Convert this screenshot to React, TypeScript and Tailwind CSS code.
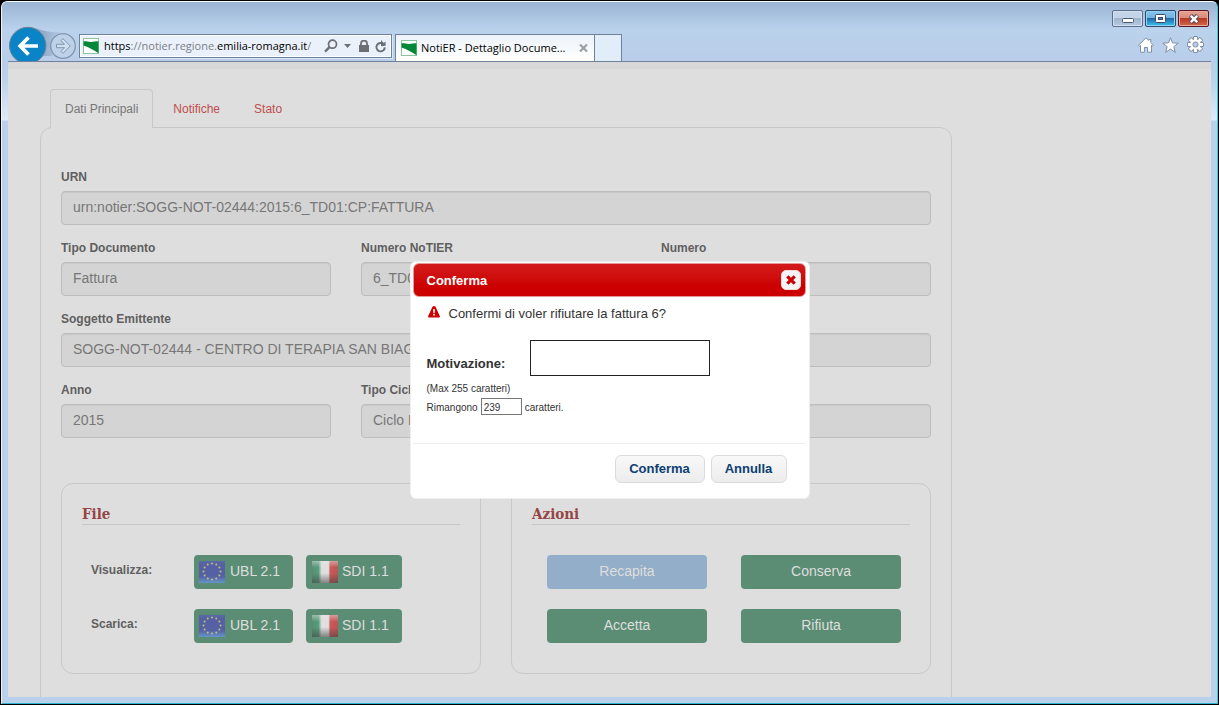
import React from "react";

type FieldProps = {
  id: string;
  label: string;
  value: string;
  wide?: boolean;
};

const FIELDS: FieldProps[] = [
  { id: "urn", label: "URN", value: "urn:notier:SOGG-NOT-02444:2015:6_TD01:CP:FATTURA", wide: true },
  { id: "tipo-documento", label: "Tipo Documento", value: "Fattura" },
  { id: "numero-notier", label: "Numero NoTIER", value: "6_TD01" },
  { id: "numero", label: "Numero", value: "" },
  { id: "emittente", label: "Soggetto Emittente", value: "SOGG-NOT-02444 - CENTRO DI TERAPIA SAN BIAGIO", wide: true },
  { id: "anno", label: "Anno", value: "2015" },
  { id: "tipo-ciclo", label: "Tipo Ciclo", value: "Ciclo Passivo" },
  { id: "stato", label: "Stato", value: "" },
];

const ACTIONS = [
  { label: "Recapita", disabled: true },
  { label: "Conserva", disabled: false },
  { label: "Accetta", disabled: false },
  { label: "Rifiuta", disabled: false },
];

export default function App() {
  return (
    <div className="flex h-screen flex-col overflow-hidden bg-black font-['Liberation_Sans',Arial,sans-serif]">
      <div className="flex min-h-0 flex-1 flex-col overflow-hidden rounded-t-md border border-black">
        <div className="flex min-h-0 flex-1 flex-col rounded-t-md border-t border-r border-b border-l border-t-white border-r-[#3fc4de] border-b-[#2fb4d0] border-l-[#eef5fc] bg-[linear-gradient(to_bottom,#9ab4d3_0px,#bad2ec_28px,#b9cde9_60px,#bcd3ec_80px,#dfeaf7_118px,#b9d1ea_119px)] px-1.5 pb-1.5">
          <BrowserHeader />
          <main className="relative min-h-0 flex-1 overflow-hidden bg-[#dedede]">
            <div className="h-[7px] bg-[#d8d8d8]" />
            <DocumentPage />
            <ConfirmDialog />
          </main>
        </div>
      </div>
    </div>
  );
}

function BrowserHeader() {
  return (
    <header className="flex h-15 flex-none flex-col overflow-hidden font-['Open_Sans','Noto_Sans',sans-serif] text-xs">
      <div className="flex h-6 flex-none justify-end gap-0.5 pt-2 pr-0.5">
        <button aria-label="Riduci a icona" className="flex h-[17px] w-[31px] items-center justify-center rounded-xs border border-[#5c6f8c] bg-[linear-gradient(#c3d4e8_0_50%,#a0b6d0_50%,#b4cae2)] shadow-[inset_0_0_0_1px_#d3e1f0]">
          <svg width="12" height="6" viewBox="0 0 12 6" className="mt-1">
            <rect x="0.5" y="0.5" width="11" height="4" rx="1" fill="#fff" stroke="#4b5565" />
          </svg>
        </button>
        <button aria-label="Ingrandisci" className="flex h-[17px] w-[31px] items-center justify-center rounded-xs border border-[#2d4a6b] bg-[linear-gradient(#8cc4ea_0,#6cb0e0_50%,#246aa5_50%,#35c4f2)] shadow-[inset_0_0_0_1px_#92d2f0]">
          <svg width="11" height="9" viewBox="0 0 11 9">
            <rect x="0.5" y="0.5" width="10" height="8" rx="1" fill="#fff" stroke="#3d4a5e" />
            <rect x="3.5" y="3.5" width="4" height="2" fill="#4b8fc6" stroke="#3d4a5e" />
          </svg>
        </button>
        <button aria-label="Chiudi" className="flex h-[17px] w-[31px] items-center justify-center rounded-xs border border-[#5b1420] bg-[linear-gradient(#e5a396_0,#d98877_50%,#b73a22_50%,#d4694c)] shadow-[inset_0_0_0_1px_#e8aa9c]">
          <svg width="12" height="10" viewBox="0 0 12 10">
            <path d="M2.500 1.500 9.500 8.500M9.500 1.500 2.500 8.500" stroke="#4b4a5a" strokeWidth="4.400" />
            <path d="M2.800 1.800 9.200 8.200M9.200 1.800 2.800 8.200" stroke="#fff" strokeWidth="2.400" />
          </svg>
        </button>
      </div>

      <div className="flex min-h-0 flex-1 border-b border-[#70829b]">
        <NavButtons />
        <div className="mt-2 flex h-6 w-[313px] flex-none items-center border border-[#6d829b] bg-[#eaf1fa] pl-[3px] shadow-[inset_0_0_0_1px_#fff,1px_1px_0_#dce8f5]">
          <FlagMark />
          <span role="textbox" aria-label="Indirizzo" className="ml-[5px] flex-1 text-[11px] leading-4 whitespace-nowrap text-[#7b7f86]">
            <span className="text-black">https</span>://notier.regione.<span className="text-black">emilia-romagna.it</span>/
          </span>
          <button aria-label="Cerca">
            <svg width="14" height="14" viewBox="0 0 14 14" fill="none" stroke="#6c6f74">
              <circle cx="8.500" cy="5.200" r="4" strokeWidth="1.700" />
              <path d="M5.500 8.200 1 12.600" strokeWidth="2.400" />
            </svg>
          </button>
          <button aria-label="Mostra indirizzi" className="ml-1.5">
            <svg width="7" height="4" viewBox="0 0 7 4">
              <path d="M0 0h7L3.500 4z" fill="#6c6f74" />
            </svg>
          </button>
          <svg width="10" height="12" viewBox="0 0 10 12" className="ml-2">
            <rect x="0" y="5" width="10" height="7" fill="#6c6f74" />
            <path d="M2 6V3.500a3 3 0 0 1 6 0V6" fill="none" stroke="#6c6f74" strokeWidth="1.800" />
          </svg>
          <button aria-label="Aggiorna" className="mr-1 ml-1.5">
            <svg width="12" height="13" viewBox="0 0 12 13">
              <path d="M9.800 7.400A4.200 4.200 0 1 1 6.600 3.100" fill="none" stroke="#6c6f74" strokeWidth="1.900" />
              <path d="M6 0v6.200l4.600-.4V1.400L8.800 3z" fill="#6c6f74" />
            </svg>
          </button>
        </div>

        <div className="mt-2 ml-[3px] flex w-[200px] flex-none items-center border border-b-0 border-[#70829b] bg-linear-to-b from-[#edf3fa] to-white pl-[5px]">
          <FlagMark />
          <span className="ml-1 flex-1 text-[11px] whitespace-nowrap text-black">NotiER - Dettaglio Docume...</span>
          <button aria-label="Chiudi scheda" className="mr-1.5">
            <svg width="9" height="8" viewBox="0 0 9 8">
              <path d="M1 .5 8 7.500M8 .5 1 7.500" stroke="#9da0a5" strokeWidth="2.200" />
            </svg>
          </button>
        </div>
        <button aria-label="Nuova scheda" className="mt-2 w-[27px] flex-none border border-b-0 border-l-0 border-[#70829b] bg-[#e1edf9]" />

        <div className="ml-auto flex items-center gap-2 pt-0.5 pr-[7px]">
          <button aria-label="Home">
            <svg width="16" height="16" viewBox="0 0 16 16" fill="#fff" stroke="#7f90a5" strokeLinejoin="round">
              <path d="M8 .8 10.800 3.500V2.500h2v3l2.700 2.800-.9 1-1.100-1v6.900H9.600v-4.700H6.400v4.700H2.500V8.300l-1.100 1-.9-1z" />
            </svg>
          </button>
          <button aria-label="Preferiti">
            <svg width="17" height="16" viewBox="0 0 17 16" fill="#fff" stroke="#7f90a5" strokeLinejoin="round">
              <path d="m8.500.7 2 5.200 5.800.2-4.500 3.600 1.500 5.600-4.800-3.200-4.800 3.200 1.500-5.600L.7 6.100l5.800-.2z" />
            </svg>
          </button>
          <button aria-label="Strumenti">
            <GearIcon />
          </button>
        </div>
      </div>
    </header>
  );
}

function GearIcon() {
  const teeth = [0, 45, 90, 135, 180, 225, 270, 315];
  return (
    <svg width="17" height="17" viewBox="0 0 17 17">
      {teeth.map((angle) => (
        <rect key={angle} x="6.500" y="0.500" width="4" height="4" rx="0.500" fill="#fff" stroke="#7f90a5" transform={`rotate(${angle} 8.500 8.500)`} />
      ))}
      <circle cx="8.500" cy="8.500" r="5.500" fill="#fff" stroke="#7f90a5" />
      {teeth.map((angle) => (
        <rect key={angle} x="7" y="1" width="3" height="4" fill="#fff" transform={`rotate(${angle} 8.500 8.500)`} />
      ))}
      <circle cx="8.500" cy="8.500" r="2.600" fill="#b9cde9" stroke="#7f90a5" />
    </svg>
  );
}

function NavButtons() {
  return (
    <div className="flex w-[71px] flex-none">
      <svg width="70" height="35" viewBox="0 0 70 35">
        <defs>
          <linearGradient id="bridge" x1="0" y1="0" x2="1" y2="0">
            <stop offset="0.4" stopColor="#91a8c6" />
            <stop offset="1" stopColor="#b4cae4" />
          </linearGradient>
        </defs>
        <path d="M22 1c9 1 14 6 30 5l-8 24H30z" fill="url(#bridge)" />
        <circle cx="19.700" cy="19.500" r="18.200" fill="#0a84c6" stroke="#6f8090" />
        <path d="M30 20H12.500M20.500 11.500l-8.300 8.500 8.300 8.500" fill="none" stroke="#fff" strokeWidth="3.700" />
        <circle cx="55" cy="20" r="12.300" fill="#bdd1e9" stroke="#8095b0" strokeWidth="1.300" />
        <path d="M48.500 18.300h8l-3.500-3.600 2-2 7.300 7.300-7.300 7.300-2-2 3.500-3.600h-8z" fill="#d0dff0" stroke="#8095b0" />
      </svg>
    </div>
  );
}

function FlagMark() {
  return (
    <svg width="16" height="16" viewBox="0 0 16 16" className="flex-none">
      <rect x="0.500" y="0.500" width="15" height="15" fill="#fff" stroke="#8cc49c" />
      <path d="M.5 3.500c3-.6 5 .9 8 .5 2.500-.3 4.500-1 7-.6v11.800C11 12.500 6 9 .5 7.500z" fill="#078838" />
    </svg>
  );
}

function DocumentPage() {
  return (
    <div className="w-full max-w-[944px] pt-5 pl-8">
      <nav className="relative z-10 ml-2.5 flex text-xs leading-4">
        <a href="#dati" aria-current="page" className="-mb-px rounded-t border border-b-0 border-[#c8c8c8] bg-[#dedede] px-3.5 pt-[11px] pb-[11px] text-[#777]">
          Dati Principali
        </a>
        <a href="#notifiche" className="pt-3 pl-5 text-[#bf4e4e]">
          Notifiche
        </a>
        <a href="#stato" className="pt-3 pl-[34px] text-[#bf4e4e]">
          Stato
        </a>
      </nav>

      <section className="h-[640px] rounded-xl border border-[#c8c8c8] px-5 pt-[39px]">
        <div className="grid grid-cols-3 gap-x-[30px] gap-y-[13px]">
          {FIELDS.map((field) => (
            <Field key={field.id} {...field} />
          ))}
        </div>

        <div className="mt-[45px] grid grid-cols-2 gap-[30px]">
          <Card title="File">
            <div className="flex flex-col gap-5 pl-[9px]">
              <FileRow label="Visualizza:" />
              <FileRow label="Scarica:" />
            </div>
          </Card>
          <Card title="Azioni">
            <div className="grid grid-cols-2 gap-x-[34px] gap-y-5 pr-[9px] pl-[15px]">
              {ACTIONS.map((action) => (
                <button key={action.label} disabled={action.disabled} className={`h-[34px] rounded pb-0.5 text-sm text-[#dedede] ${action.disabled ? "bg-[#93aec8]" : "bg-[#5b8d74]"}`}>
                  {action.label}
                </button>
              ))}
            </div>
          </Card>
        </div>
      </section>
    </div>
  );
}

function Field({ id, label, value, wide }: FieldProps) {
  return (
    <div className={wide ? "col-span-3" : ""}>
      <label htmlFor={id} className="mb-1 block text-xs leading-5 font-bold text-[#5f5f5f]">
        {label}
      </label>
      <input
        id={id}
        type="text"
        readOnly
        value={value}
        className="block h-[34px] w-full rounded border border-[#bdbdbd] bg-[#d4d4d4] px-[11px] pb-0.5 text-sm text-[#777] shadow-[inset_0_1px_1px_rgba(0,0,0,0.06)]"
      />
    </div>
  );
}

function Card({ title, children }: { title: string; children: React.ReactNode }) {
  return (
    <div className="rounded-xl border border-[#c8c8c8] px-5 pt-5 pb-[30px]">
      <h2 className="mb-[30px] border-b border-[#c8c8c8] font-['DejaVu_Serif_Condensed','DejaVu_Serif',serif] text-[15px] leading-5 font-bold text-[#944545]">{title}</h2>
      {children}
    </div>
  );
}

function FileRow({ label }: { label: string }) {
  return (
    <div className="flex items-center">
      <span className="w-[103px] pb-1 text-xs font-bold text-[#5f5f5f]">{label}</span>
      <button className="mr-[13px] flex h-[34px] w-[99px] items-center rounded bg-[#5b8d74] pl-[5px] text-sm text-[#dedede]">
        <EuFlag />
        <span className="ml-[5px] pb-0.5">UBL 2.1</span>
      </button>
      <button className="flex h-[34px] w-24 items-center rounded bg-[#5b8d74] pl-1.5 text-sm text-[#dedede]">
        <ItalianFlag />
        <span className="ml-1 pb-0.5">SDI 1.1</span>
      </button>
    </div>
  );
}

function EuFlag() {
  const stars = Array.from({ length: 12 }, (_, i) => (i * Math.PI) / 6);
  return (
    <svg width="26" height="22" viewBox="0 0 26 22">
      <defs>
        <linearGradient id="eu" x1="0" y1="0" x2="0" y2="1">
          <stop offset="0" stopColor="#5a68a6" />
          <stop offset="0.2" stopColor="#5660a2" />
          <stop offset="0.7" stopColor="#5561a4" />
          <stop offset="1" stopColor="#6596cc" />
        </linearGradient>
      </defs>
      <rect width="26" height="22" fill="url(#eu)" />
      {stars.map((angle) => (
        <circle key={angle} cx={13 + 8.5 * Math.cos(angle)} cy={10.5 + 8 * Math.sin(angle)} r="1" fill="#c3c27d" />
      ))}
    </svg>
  );
}

function ItalianFlag() {
  return (
    <svg width="26" height="22" viewBox="0 0 26 22">
      <defs>
        <linearGradient id="tricolore" x1="0" y1="0" x2="1" y2="0">
          <stop offset="0" stopColor="#55906f" />
          <stop offset="0.25" stopColor="#579c7e" />
          <stop offset="0.37" stopColor="#e0dfdf" />
          <stop offset="0.63" stopColor="#e0dfdf" />
          <stop offset="0.7" stopColor="#cf5757" />
          <stop offset="1" stopColor="#b95656" />
        </linearGradient>
        <linearGradient id="shade" x1="0" y1="0" x2="0" y2="1">
          <stop offset="0" stopColor="#e6e6e6" stopOpacity="0.5" />
          <stop offset="0.3" stopColor="#e6e6e6" stopOpacity="0" />
          <stop offset="0.55" stopColor="#444" stopOpacity="0" />
          <stop offset="1" stopColor="#444" stopOpacity="0.6" />
        </linearGradient>
      </defs>
      <rect width="26" height="22" fill="url(#tricolore)" />
      <rect width="26" height="22" fill="url(#shade)" />
    </svg>
  );
}

function ConfirmDialog() {
  return (
    <div className="absolute inset-0 z-20 flex items-center justify-center">
      <div role="dialog" aria-labelledby="dialog-title" className="w-[400px] rounded-md border border-[#efefef] bg-white pt-px pr-[3px] pl-0.5 text-[13px] text-[#333]">
        <div className="flex h-[34px] items-center justify-between rounded-md border border-[#e39a9a] bg-linear-to-b from-[#d31a1a] to-[#cc0000] to-70% pr-1 pl-[13px]">
          <h2 id="dialog-title" className="pt-0.5 font-bold text-white">
            Conferma
          </h2>
          <button aria-label="Chiudi" className="flex size-5 items-center justify-center rounded-[5px] border border-[#f3dada] bg-[#f4f4f4]">
            <svg width="10" height="10" viewBox="0 0 10 10">
              <path d="M1.300 1.300 8.700 8.700M8.700 1.300 1.300 8.700" stroke="#cc0000" strokeWidth="3.200" />
            </svg>
          </button>
        </div>

        <div className="px-3.5 pt-[9px]">
          <p className="flex items-center leading-4">
            <svg width="14" height="12" viewBox="0 0 14 12" className="mr-2 mb-1">
              <path d="M5.600.6q1.400-1 2.800 0l4.500 9.600Q13.100 11.300 12 11.500H2Q.9 11.300 1.100 10.200z" fill="#cc0000" />
              <path d="M6 3.200h2l-.4 4H6.400zM6.200 8h1.600v1.600H6.200z" fill="#fff" />
            </svg>
            Confermi di voler rifiutare la fattura 6?
          </p>
          <div className="mt-[18px] flex items-end">
            <label htmlFor="motivazione" className="w-[103px] pb-0.5 font-bold">
              Motivazione:
            </label>
            <textarea id="motivazione" className="block h-9 w-[180px] resize-none border border-[#222] bg-white p-1" />
          </div>
          <p className="mt-[5px] text-[10px] leading-4">(Max 255 caratteri)</p>
          <p className="mt-px flex items-center gap-[3px] text-[10px] leading-4">
            <label htmlFor="rimangono" className="pt-0.5">
              Rimangono
            </label>
            <input id="rimangono" readOnly value="239" className="h-[17px] w-[41px] border border-[#767676] bg-white px-0.5 pt-0.5" />
            <span className="pt-0.5">caratteri.</span>
          </p>
        </div>

        <div className="mt-[27px] flex justify-end gap-1.5 border-t border-[#eee] pt-[11px] pr-[19px] pb-[15px] font-bold text-[#0b4073]">
          <button className="h-7 w-[90px] rounded-md border border-[#d8dcdf] bg-linear-to-b from-[#f8f8f8] to-[#ececec]">Conferma</button>
          <button className="h-7 w-[76px] rounded-md border border-[#d8dcdf] bg-linear-to-b from-[#f8f8f8] to-[#ececec]">Annulla</button>
        </div>
      </div>
    </div>
  );
}
